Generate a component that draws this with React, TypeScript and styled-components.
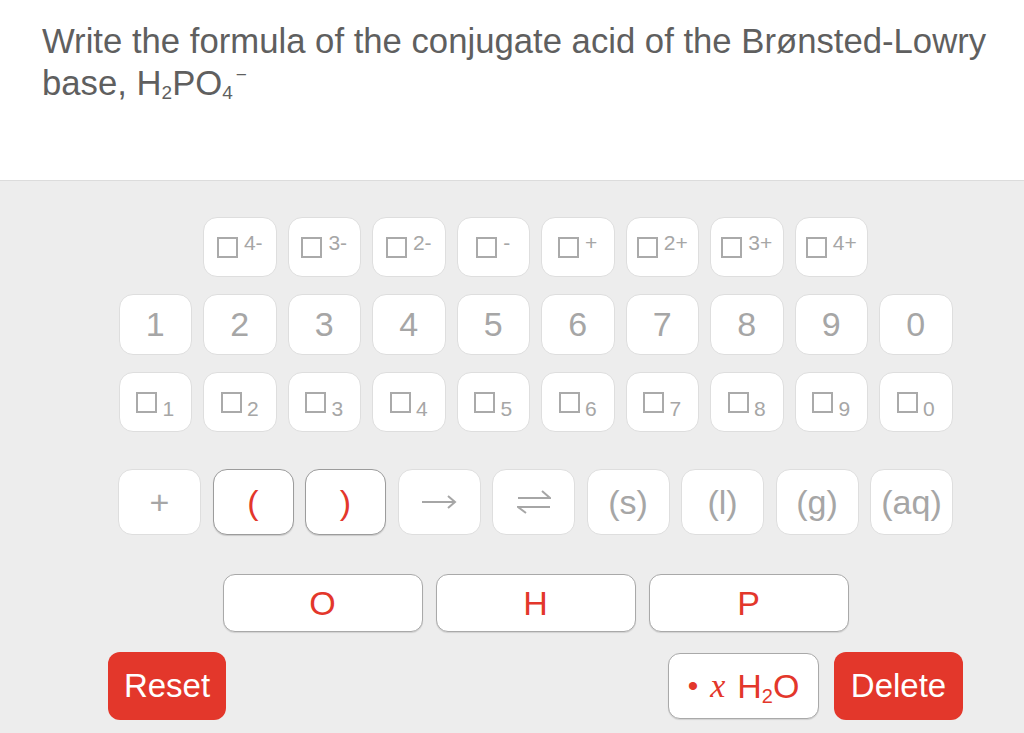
import React from "react";
import styled, { createGlobalStyle } from "styled-components";

const GlobalStyle = createGlobalStyle`
  html, body {
    margin: 0;
    padding: 0;
    background: #ededed;
  }
  body {
    font-family: "Liberation Sans", Arial, sans-serif;
  }
`;

const RED = "#e3372b";
const GREY = "#a6a6a6";

const charges = ["4-", "3-", "2-", "-", "+", "2+", "3+", "4+"];
const digits = ["1", "2", "3", "4", "5", "6", "7", "8", "9", "0"];
const states = ["(s)", "(l)", "(g)", "(aq)"];
const elements = ["O", "H", "P"];

const ArrowIcon = () => (
  <svg width="36" height="14" viewBox="0 0 36 14" fill="none" stroke={GREY} strokeWidth="2">
    <path d="M1 7 H34" />
    <path d="M27 1 L34 7 L27 13" />
  </svg>
);

const EquilibriumIcon = () => (
  <svg width="34" height="24" viewBox="0 0 34 24" fill="none" stroke={GREY} strokeWidth="2">
    <path d="M1 8 H33 L25 1" />
    <path d="M33 17 H1 L9 23" />
  </svg>
);

const App = () => {
  return (
    <>
      <GlobalStyle />
      <Header>
        <Question>
          Write the formula of the conjugate acid of the Brønsted-Lowry base, H
          <TitleSub>2</TitleSub>PO<TitleSub>4</TitleSub>
          <TitleSup>−</TitleSup>
        </Question>
      </Header>
      <Panel>
        <Pad>
          <Row $mt={0} $gap={11}>
            {charges.map((c) => (
              <Key key={c} $w={73.5} $h={60}>
                <Glyph>
                  <Box />
                  <Script $up>{c}</Script>
                </Glyph>
              </Key>
            ))}
          </Row>
          <Row $mt={17} $gap={11}>
            {digits.map((d) => (
              <Key key={d} $w={73.5} $h={61}>
                {d}
              </Key>
            ))}
          </Row>
          <Row $mt={17} $gap={11}>
            {digits.map((d) => (
              <Key key={d} $w={73.5} $h={60}>
                <Glyph>
                  <Box />
                  <Script>{d}</Script>
                </Glyph>
              </Key>
            ))}
          </Row>
          <Row $mt={37} $gap={11.5}>
            <Key $w={83} $h={66}>
              +
            </Key>
            <Key $w={81} $h={66} $strong $red>
              (
            </Key>
            <Key $w={81} $h={66} $strong $red>
              )
            </Key>
            <Key $w={83} $h={66}>
              <ArrowIcon />
            </Key>
            <Key $w={83} $h={66}>
              <EquilibriumIcon />
            </Key>
            {states.map((s) => (
              <Key key={s} $w={83} $h={66}>
                {s}
              </Key>
            ))}
          </Row>
          <Row $mt={39} $gap={13}>
            {elements.map((el) => (
              <ElementKey key={el}>{el}</ElementKey>
            ))}
          </Row>
          <BottomRow>
            <RedButton $w={118}>Reset</RedButton>
            <RightGroup>
              <WaterButton>
                <Dot>•</Dot>
                <MathX>x</MathX>
                <span>
                  H<WaterSub>2</WaterSub>O
                </span>
              </WaterButton>
              <RedButton $w={129}>Delete</RedButton>
            </RightGroup>
          </BottomRow>
        </Pad>
      </Panel>
    </>
  );
};

export default App;

const Header = styled.div`
  background: #ffffff;
  height: 180px;
  border-bottom: 1px solid #dcdcdc;
  box-sizing: content-box;
`;

const Question = styled.div`
  padding: 20px 20px 0 42px;
  font-size: 34.7px;
  line-height: 42px;
  color: #5f5f5f;
`;

const TitleSub = styled.sub`
  font-size: 19px;
  vertical-align: -4px;
  line-height: 0;
`;

const TitleSup = styled.sup`
  font-size: 19px;
  vertical-align: 14px;
  line-height: 0;
  margin-left: 3px;
`;

const Panel = styled.div`
  background: #ededed;
  min-height: calc(100vh - 181px);
  padding-top: 36px;
  box-sizing: border-box;
`;

const Pad = styled.div`
  width: 855px;
  margin-left: 108px;
`;

const Row = styled.div<{ $mt: number; $gap: number }>`
  display: flex;
  justify-content: center;
  gap: ${(p) => p.$gap}px;
  margin-top: ${(p) => p.$mt}px;
`;

const Key = styled.button<{ $w: number; $h: number; $strong?: boolean; $red?: boolean }>`
  width: ${(p) => p.$w}px;
  height: ${(p) => p.$h}px;
  flex: none;
  padding: 0;
  display: flex;
  align-items: center;
  justify-content: center;
  background: #ffffff;
  border: 1px solid ${(p) => (p.$strong ? "#9c9c9c" : "#dedede")};
  border-radius: 14px;
  box-shadow: ${(p) => (p.$strong ? "0 1px 1px rgba(0,0,0,0.15)" : "none")};
  font-family: "Liberation Sans", Arial, sans-serif;
  font-size: 34px;
  color: ${(p) => (p.$red ? RED : GREY)};
  cursor: pointer;
`;

const Glyph = styled.span`
  display: flex;
  align-items: center;
  height: 34px;
`;

const Box = styled.span`
  width: 21px;
  height: 21px;
  box-sizing: border-box;
  border: 2px solid #aaaaaa;
`;

const Script = styled.span<{ $up?: boolean }>`
  align-self: ${(p) => (p.$up ? "flex-start" : "flex-end")};
  margin-top: ${(p) => (p.$up ? 2 : 0)}px;
  margin-left: ${(p) => (p.$up ? 6 : 5)}px;
  font-size: 21px;
  line-height: 1;
  color: ${GREY};
`;

const ElementKey = styled.button`
  width: 200px;
  height: 58px;
  padding: 0;
  background: #ffffff;
  border: 1px solid #a9a9a9;
  border-radius: 12px;
  box-shadow: 0 1px 1px rgba(0, 0, 0, 0.12);
  font-family: "Liberation Sans", Arial, sans-serif;
  font-size: 34px;
  color: ${RED};
  cursor: pointer;
`;

const BottomRow = styled.div`
  display: flex;
  justify-content: space-between;
  align-items: center;
  margin-top: 20px;
`;

const RightGroup = styled.div`
  display: flex;
  align-items: center;
  gap: 15px;
`;

const RedButton = styled.button<{ $w: number }>`
  width: ${(p) => p.$w}px;
  height: 68px;
  padding: 0;
  background: ${RED};
  border: none;
  border-radius: 12px;
  font-family: "Liberation Sans", Arial, sans-serif;
  font-size: 33px;
  color: #ffffff;
  cursor: pointer;
`;

const WaterButton = styled.button`
  width: 151px;
  height: 66px;
  padding: 0;
  display: flex;
  align-items: center;
  justify-content: center;
  gap: 12px;
  background: #ffffff;
  border: 1px solid #a9a9a9;
  border-radius: 12px;
  box-shadow: 0 1px 1px rgba(0, 0, 0, 0.12);
  font-family: "Liberation Sans", Arial, sans-serif;
  font-size: 34px;
  color: ${RED};
  cursor: pointer;
`;

const Dot = styled.span`
  font-size: 30px;
`;

const MathX = styled.span`
  font-family: "Liberation Serif", "Times New Roman", serif;
  font-style: italic;
  font-size: 34px;
`;

const WaterSub = styled.sub`
  font-size: 20px;
  vertical-align: -5px;
  line-height: 0;
`;
